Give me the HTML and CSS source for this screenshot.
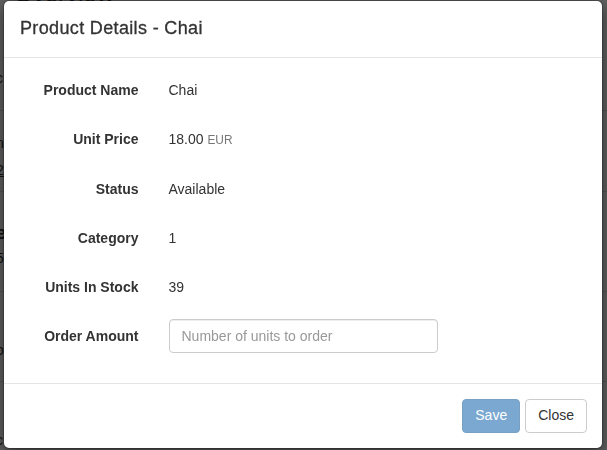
FILE: index.html
```html
<!DOCTYPE html>
<html>
<head>
<meta charset="utf-8">
<link rel="stylesheet" href="styles.css">
</head>
<body>
<div class="page">
  <div class="page-title">Overview</div>
  <div class="page-row r1"><span>c</span></div>
  <div class="page-row r2"><span>n</span><span class="ul">2</span></div>
  <div class="page-row r3"><span>e</span><span class="thin">5</span></div>
  <div class="page-row r4"><span>.</span><span>o</span></div>
  <div class="page-row r5"><span>.</span><span>c</span></div>
</div>
<div class="backdrop"></div>
<div class="modal">
  <div class="modal-header">
    <h4 class="modal-title">Product Details - Chai</h4>
  </div>
  <div class="modal-body">
    <form class="form-horizontal">
      <div class="form-group">
        <label class="control-label">Product Name</label>
        <div class="value"><p class="static">Chai</p></div>
      </div>
      <div class="form-group">
        <label class="control-label">Unit Price</label>
        <div class="value"><p class="static">18.00 <small class="muted">EUR</small></p></div>
      </div>
      <div class="form-group">
        <label class="control-label">Status</label>
        <div class="value"><p class="static">Available</p></div>
      </div>
      <div class="form-group">
        <label class="control-label">Category</label>
        <div class="value"><p class="static">1</p></div>
      </div>
      <div class="form-group">
        <label class="control-label">Units In Stock</label>
        <div class="value"><p class="static">39</p></div>
      </div>
      <div class="form-group">
        <label class="control-label">Order Amount</label>
        <div class="value"><input class="form-control" type="text" placeholder="Number of units to order"></div>
      </div>
    </form>
  </div>
  <div class="modal-footer">
    <button class="btn btn-primary" disabled>Save</button>
    <button class="btn btn-default">Close</button>
  </div>
</div>
</body>
</html>
```
FILE: styles.css
```css
* { box-sizing: border-box; }
html, body {
  margin: 0;
  height: 100%;
}
body {
  font-family: "Liberation Sans", Arial, sans-serif;
  font-size: 14px;
  line-height: 1.42857;
  color: #333;
  background: #fff;
  overflow: hidden;
}
.page {
  display: flex;
  flex-direction: column;
  margin-left: -4px;
}
.page-title {
  font-size: 24px;
  line-height: 1;
  margin-top: -18px;
  padding-left: 18px;
  height: 20px;
}
.page-row {
  border-bottom: 1px solid #ddd;
  display: flex;
  flex-direction: column;
  font-size: 14px;
  line-height: 20px;
}
.r1 { height: 109px; padding-top: 66px; }
.r2 { height: 81px; padding-top: 22px; gap: 7px; }
.r3 { height: 100px; padding-top: 31px; gap: 5px; font-weight: bold; font-size: 18px; }
.r4 { height: 90px; padding-top: 21px; gap: 7px; }
.r5 { height: 90px; padding-top: 21px; gap: 7px; }
.r3 .thin { font-weight: normal; font-size: 14px; }
.ul { text-decoration: underline; }

.backdrop {
  position: fixed;
  inset: 0;
  background: rgba(0, 0, 0, 0.62);
}
.modal {
  position: fixed;
  top: 0;
  left: 3px;
  width: 600px;
  background: #fff;
  border: 1px solid rgba(0, 0, 0, 0.2);
  border-radius: 6px;
  box-shadow: 0 5px 15px rgba(0, 0, 0, 0.5);
  background-clip: padding-box;
}
.modal-header {
  padding: 15px;
  border-bottom: 1px solid #e5e5e5;
}
.modal-title {
  margin: 0;
  font-size: 18px;
  font-weight: 500;
  line-height: 1.42857;
  color: #333;
  letter-spacing: 0.35px;
  -webkit-text-stroke: 0.3px #333;
  padding-left: 1px;
}
.modal-body {
  padding: 15px;
}
.form-horizontal {
  margin: 0 -15px;
  display: flex;
  flex-direction: column;
  gap: 15px;
  padding-bottom: 15px;
}
.form-group {
  display: grid;
  grid-template-columns: 25% 50%;
}
.control-label {
  padding: 7px 15px 0;
  text-align: right;
  font-weight: bold;
  line-height: 20px;
}
.value {
  padding: 0 15px;
}
.static {
  margin: 0;
  padding: 7px 0;
  min-height: 34px;
  line-height: 20px;
}
.muted {
  color: #777;
  font-size: 85%;
}
.form-control {
  display: block;
  width: 100%;
  height: 34px;
  padding: 6px 12px;
  font-family: inherit;
  font-size: 14px;
  line-height: 1.42857;
  color: #555;
  background: #fff;
  border: 1px solid #ccc;
  border-radius: 4px;
  box-shadow: inset 0 1px 1px rgba(0, 0, 0, 0.075);
  margin: 0;
}
.form-control::placeholder {
  color: #999;
}
.modal-footer {
  padding: 15px;
  border-top: 1px solid #e5e5e5;
  display: flex;
  justify-content: flex-end;
  gap: 5px;
}
.btn {
  font-family: inherit;
  font-size: 14px;
  line-height: 1.42857;
  padding: 6px 12px;
  border-radius: 4px;
  border: 1px solid transparent;
  height: 34px;
  margin: 0;
}
.btn-primary {
  color: #fff;
  background: #337ab7;
  border-color: #2e6da4;
  opacity: 0.65;
}
.btn-default {
  color: #333;
  background: #fff;
  border-color: #ccc;
}
```
